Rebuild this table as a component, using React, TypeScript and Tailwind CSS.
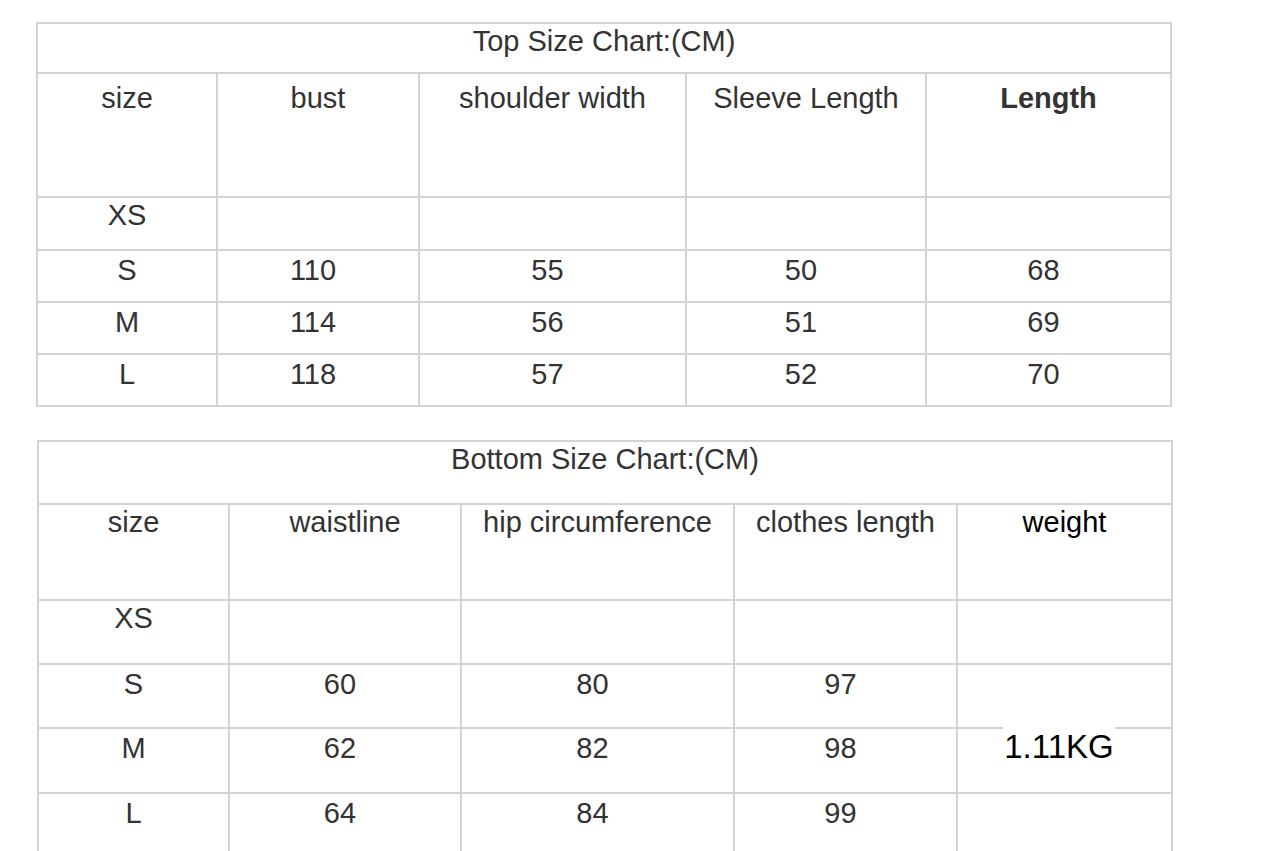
const topCols = "grid grid-cols-[178px_202px_267px_240px_1fr]";
const bottomCols = "grid grid-cols-[189px_232px_273px_223px_1fr]";

type Row = { cells: string[]; h: string; pt: string };

const topRows: Row[] = [
  { cells: ["size", "bust", "shoulder width", "Sleeve Length", "Length"], h: "h-[124px]", pt: "pt-[7px]" },
  { cells: ["XS", "", "", "", ""], h: "h-[53px]", pt: "pt-0" },
  { cells: ["S", "110", "55", "50", "68"], h: "h-[52px]", pt: "pt-[2px]" },
  { cells: ["M", "114", "56", "51", "69"], h: "h-[52px]", pt: "pt-[2px]" },
  { cells: ["L", "118", "57", "52", "70"], h: "h-[52px]", pt: "pt-[2px]" },
];

const bottomRows: Row[] = [
  { cells: ["size", "waistline", "hip circumference", "clothes length", "weight"], h: "h-[96px]", pt: "pt-0" },
  { cells: ["XS", "", "", "", ""], h: "h-[64px]", pt: "pt-0" },
  { cells: ["S", "60", "80", "97", ""], h: "h-[64px]", pt: "pt-[2px]" },
  { cells: ["M", "62", "82", "98", ""], h: "h-[65px]", pt: "pt-[2px]" },
  { cells: ["L", "64", "84", "99", ""], h: "h-[64px]", pt: "pt-[2px]" },
];

function Table({
  title,
  titleH,
  cols,
  rows,
  width,
  kind,
}: {
  title: string;
  titleH: string;
  cols: string;
  rows: Row[];
  width: string;
  kind: "top" | "bottom";
}) {
  return (
    <div className={`${width} border-2 border-[#d3d3d3] bg-white`}>
      <div className={`${titleH} flex justify-center`}>{title}</div>
      {rows.map((row, ri) => (
        <div key={ri} className={`${cols} ${row.h} border-t-2 border-[#d3d3d3]`}>
          {row.cells.map((c, ci) => {
            const bold = kind === "top" && ri === 0 && ci === 4;
            const black = kind === "bottom" && ri === 0 && ci === 4;
            const isNumber = ri > 0 && ci > 0;
            return (
              <div
                key={ci}
                className={`relative flex justify-center ${row.pt} ${isNumber ? "pr-[10px]" : ""} ${
                  ci > 0 ? "border-l-2 border-[#d3d3d3]" : ""
                } ${bold ? "font-bold" : ""} ${black ? "text-black" : ""}`}
              >
                {c}
                {/* weight value sits over the row line */}
                {kind === "bottom" && ri === 3 && ci === 4 && (
                  <span className="absolute -top-[4px] left-[45px] w-[112px] bg-white pt-[3px] text-center text-[33px] leading-[38px] text-black">
                    1.11KG
                  </span>
                )}
              </div>
            );
          })}
        </div>
      ))}
    </div>
  );
}

export default function App() {
  return (
    <div className="min-h-screen w-full bg-white pl-[36px] pt-[22px] font-['Liberation_Sans',Arial,sans-serif] text-[29px] leading-[35px] text-[#333333]">
      <Table
        title="Top Size Chart:(CM)"
        titleH="h-[48px]"
        cols={topCols}
        rows={topRows}
        width="w-[1136px]"
        kind="top"
      />
      <div className="h-[33px]" />
      <div className="pl-[1px]">
        <Table
          title="Bottom Size Chart:(CM)"
          titleH="h-[61px]"
          cols={bottomCols}
          rows={bottomRows}
          width="w-[1136px]"
          kind="bottom"
        />
      </div>
    </div>
  );
}
